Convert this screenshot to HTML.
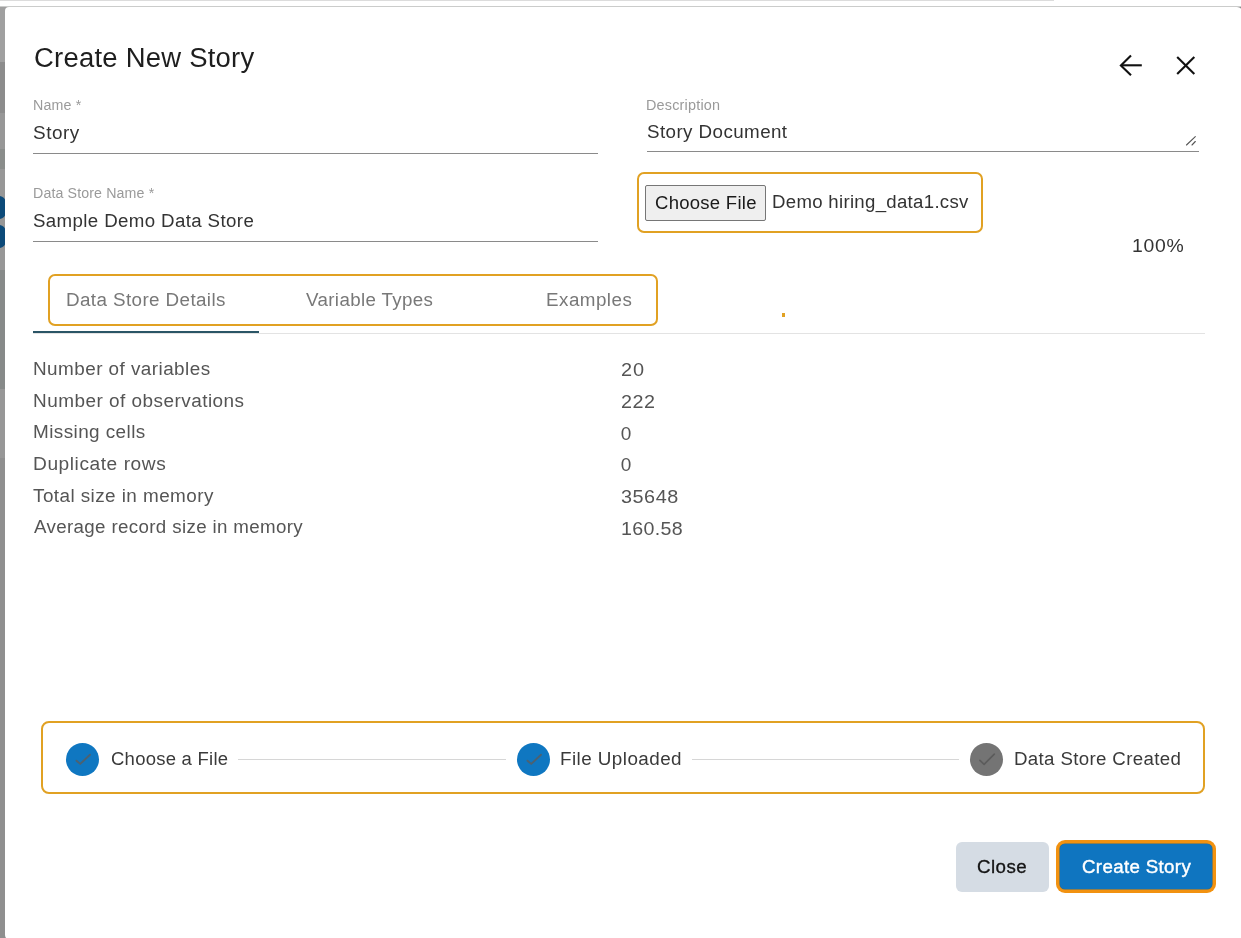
<!DOCTYPE html>
<html><head><meta charset="utf-8"><title>Create New Story</title>
<style>
html,body{margin:0;padding:0;width:1241px;height:938px;overflow:hidden;background:#fff;font-family:"Liberation Sans",sans-serif;}
.a{position:absolute;box-sizing:border-box;}
.t{position:absolute;line-height:0;white-space:nowrap;font-family:"Liberation Sans",sans-serif;}
</style></head><body>
<!-- backdrop -->
<div class="a" style="left:0;top:0;width:1054px;height:1px;background:#dcdcdc"></div>
<div class="a" style="left:0;top:6px;width:1241px;height:1px;background:#cbcccb"></div>
<div class="a" style="left:0;top:7px;width:12px;height:931px;background:#8f8f8f"></div>
<div class="a" style="left:0;top:7px;width:12px;height:55px;background:#a0a0a0"></div>
<div class="a" style="left:0;top:62px;width:6px;height:51px;background:#8c8c8c"></div>
<div class="a" style="left:0;top:113px;width:6px;height:36px;background:#979797"></div>
<div class="a" style="left:0;top:149px;width:6px;height:20px;background:#8a8d8b"></div>
<div class="a" style="left:0;top:169px;width:6px;height:101px;background:#979797"></div>
<div class="a" style="left:0;top:270px;width:6px;height:119px;background:#878a89"></div>
<div class="a" style="left:0;top:389px;width:6px;height:69px;background:#979797"></div>
<div class="a" style="left:-6px;top:196px;width:12px;height:23px;border-radius:0 7px 7px 0;background:#0c4a79"></div>
<div class="a" style="left:-6px;top:224.5px;width:12px;height:23px;border-radius:0 7px 7px 0;background:#0c4a79"></div>
<div class="a" style="left:1230px;top:7px;width:11px;height:14px;background:#8c8c8c"></div>
<!-- modal -->
<div class="a" style="left:5px;top:7px;width:1238px;height:933px;background:#fff;border-radius:4px 6px 6px 5px"></div>

<!-- header icons -->
<svg class="a" style="left:1110px;top:45px" width="100" height="40" viewBox="0 0 100 40"><g fill="none" stroke="#111" stroke-width="2.1" stroke-linecap="butt" stroke-linejoin="miter"><polyline points="21,10.5 10.9,20.4 21,30.3"/><line x1="11" y1="20.3" x2="31.8" y2="20.3"/><line x1="67.2" y1="11.9" x2="84.3" y2="29"/><line x1="67.2" y1="29" x2="84.3" y2="11.9"/></g></svg>
<!-- underlines -->
<div class="a" style="left:33px;top:153px;width:565px;height:1px;background:#8a8a8a"></div>
<div class="a" style="left:647px;top:151px;width:552px;height:1px;background:#8a8a8a"></div>
<div class="a" style="left:33px;top:241px;width:565px;height:1px;background:#8a8a8a"></div>
<!-- resize handle -->
<svg class="a" style="left:1180px;top:130px" width="20" height="20" viewBox="0 0 20 20"><g stroke="#555" stroke-width="1.1" stroke-linecap="round"><line x1="6.5" y1="15" x2="15.3" y2="6.6"/><line x1="12" y1="15" x2="15.3" y2="11.5"/></g></svg>

<!-- file box -->
<div class="a" style="left:637px;top:172px;width:346px;height:61px;border:2px solid #e1a123;border-radius:7px"></div>
<div class="a" style="left:645px;top:185px;width:121px;height:36px;border:1px solid #767676;border-radius:2px;background:#efefef"></div>

<!-- tabs -->
<div class="a" style="left:48px;top:274px;width:610px;height:52px;border:2px solid #e1a123;border-radius:7px"></div>
<div class="a" style="left:33px;top:333px;width:1172px;height:1px;background:#e3e3e3"></div>
<div class="a" style="left:33px;top:331px;width:226px;height:2px;background:#2a5566"></div>
<div class="a" style="left:782px;top:313px;width:3px;height:4px;background:#e1a123"></div>

<!-- stepper -->
<div class="a" style="left:41px;top:721px;width:1164px;height:73px;border:2px solid #e1a123;border-radius:8px"></div>
<div class="a" style="left:238px;top:759px;width:268px;height:1px;background:#d6d6d6"></div>
<div class="a" style="left:692px;top:759px;width:267px;height:1px;background:#d6d6d6"></div>
<div class="a" style="left:65.8px;top:742.8px;width:33.2px;height:33.2px;border-radius:50%;background:#0f77c1"></div>
<div class="a" style="left:516.8px;top:742.8px;width:33.2px;height:33.2px;border-radius:50%;background:#0f77c1"></div>
<div class="a" style="left:970px;top:742.9px;width:33px;height:33px;border-radius:50%;background:#747474"></div>
<svg class="a" style="left:65.8px;top:742.8px" width="34" height="34" viewBox="0 0 34 34"><path d="M10.5 17.7 L14.2 20.9 L24 11.8" fill="none" stroke="#4d6170" stroke-width="1.9" stroke-linecap="round" stroke-linejoin="round"/></svg>
<svg class="a" style="left:516.8px;top:742.8px" width="34" height="34" viewBox="0 0 34 34"><path d="M10.5 17.7 L14.2 20.9 L24 11.8" fill="none" stroke="#4d6170" stroke-width="1.9" stroke-linecap="round" stroke-linejoin="round"/></svg>
<svg class="a" style="left:970px;top:742.8px" width="34" height="34" viewBox="0 0 34 34"><path d="M9.9 17.3 L14.1 21.3 L24.3 11.1" fill="none" stroke="#5c5c5c" stroke-width="1.7" stroke-linecap="round" stroke-linejoin="round"/></svg>

<!-- buttons -->
<div class="a" style="left:956px;top:842px;width:93px;height:50px;border-radius:6px;background:#d5dce4"></div>
<div class="a" style="left:1056px;top:840px;width:160px;height:53px;border-radius:9px;background:#f29210"></div>
<div class="a" style="left:1060px;top:844px;width:152px;height:44.5px;border-radius:5px;background:#0f75c0;box-shadow:0 0 0 0.6px #2f6a88"></div>

<div style="position:absolute;left:0;top:0;width:1241px;height:938px;will-change:transform">
<div class="t" style="left:33.91px;top:58.30px;font-size:27px;letter-spacing:0.231px;color:#1e1e1e;font-weight:400;transform:scaleX(1.0167);transform-origin:0 0;">Create New Story</div>
<div class="t" style="left:32.63px;top:104.80px;font-size:14px;letter-spacing:0.156px;color:#9a9a9a;font-weight:400;transform:scaleX(1.0175);transform-origin:0 0;">Name *</div>
<div class="t" style="left:646.42px;top:104.80px;font-size:14px;letter-spacing:0.191px;color:#9a9a9a;font-weight:400;transform:scaleX(1.0289);transform-origin:0 0;">Description</div>
<div class="t" style="left:32.63px;top:192.60px;font-size:14px;letter-spacing:0.113px;color:#9a9a9a;font-weight:400;transform:scaleX(1.0158);transform-origin:0 0;">Data Store Name *</div>
<div class="t" style="left:32.94px;top:133.00px;font-size:18px;letter-spacing:0.504px;color:#333333;font-weight:400;transform:scaleX(1.0515);transform-origin:0 0;">Story</div>
<div class="t" style="left:646.75px;top:131.80px;font-size:18px;letter-spacing:0.406px;color:#333333;font-weight:400;transform:scaleX(1.0429);transform-origin:0 0;">Story Document</div>
<div class="t" style="left:32.95px;top:221.00px;font-size:18px;letter-spacing:0.358px;color:#333333;font-weight:400;transform:scaleX(1.0384);transform-origin:0 0;">Sample Demo Data Store</div>
<div class="t" style="left:654.86px;top:202.90px;font-size:18px;letter-spacing:0.261px;color:#1a1a1a;font-weight:400;transform:scaleX(1.0284);transform-origin:0 0;">Choose File</div>
<div class="t" style="left:771.67px;top:201.60px;font-size:18px;letter-spacing:0.296px;color:#333333;font-weight:400;transform:scaleX(1.0335);transform-origin:0 0;">Demo hiring_data1.csv</div>
<div class="t" style="left:1132.32px;top:245.80px;font-size:18.5px;letter-spacing:0.677px;color:#333333;font-weight:400;transform:scaleX(1.0470);transform-origin:0 0;">100%</div>
<div class="t" style="left:66.06px;top:300.10px;font-size:18px;letter-spacing:0.373px;color:#787878;font-weight:400;transform:scaleX(1.0461);transform-origin:0 0;">Data Store Details</div>
<div class="t" style="left:305.82px;top:300.10px;font-size:18px;letter-spacing:0.351px;color:#787878;font-weight:400;transform:scaleX(1.0406);transform-origin:0 0;">Variable Types</div>
<div class="t" style="left:545.66px;top:300.10px;font-size:18px;letter-spacing:0.458px;color:#787878;font-weight:400;transform:scaleX(1.0435);transform-origin:0 0;">Examples</div>
<div class="t" style="left:33.45px;top:368.90px;font-size:18px;letter-spacing:0.422px;color:#555555;font-weight:400;transform:scaleX(1.0502);transform-origin:0 0;">Number of variables</div>
<div class="t" style="left:33.45px;top:401.30px;font-size:18px;letter-spacing:0.449px;color:#555555;font-weight:400;transform:scaleX(1.0525);transform-origin:0 0;">Number of observations</div>
<div class="t" style="left:33.45px;top:432.20px;font-size:18px;letter-spacing:0.401px;color:#555555;font-weight:400;transform:scaleX(1.0506);transform-origin:0 0;">Missing cells</div>
<div class="t" style="left:32.93px;top:464.40px;font-size:18px;letter-spacing:0.528px;color:#555555;font-weight:400;transform:scaleX(1.0629);transform-origin:0 0;">Duplicate rows</div>
<div class="t" style="left:33.18px;top:496.30px;font-size:18px;letter-spacing:0.408px;color:#555555;font-weight:400;transform:scaleX(1.0498);transform-origin:0 0;">Total size in memory</div>
<div class="t" style="left:33.86px;top:527.20px;font-size:18px;letter-spacing:0.342px;color:#555555;font-weight:400;transform:scaleX(1.0400);transform-origin:0 0;">Average record size in memory</div>
<div class="t" style="left:621.00px;top:369.80px;font-size:19px;letter-spacing:0.889px;color:#555555;font-weight:400;transform:scaleX(1.0480);transform-origin:0 0;">20</div>
<div class="t" style="left:621.01px;top:401.80px;font-size:19px;letter-spacing:0.556px;color:#555555;font-weight:400;transform:scaleX(1.0388);transform-origin:0 0;">222</div>
<div class="t" style="left:620.76px;top:433.80px;font-size:19px;letter-spacing:0.000px;color:#555555;font-weight:400;">0</div>
<div class="t" style="left:620.76px;top:464.80px;font-size:19px;letter-spacing:0.000px;color:#555555;font-weight:400;">0</div>
<div class="t" style="left:621.05px;top:496.80px;font-size:19px;letter-spacing:0.518px;color:#555555;font-weight:400;transform:scaleX(1.0421);transform-origin:0 0;">35648</div>
<div class="t" style="left:621.31px;top:529.00px;font-size:19px;letter-spacing:0.345px;color:#555555;font-weight:400;transform:scaleX(1.0319);transform-origin:0 0;">160.58</div>
<div class="t" style="left:110.56px;top:758.60px;font-size:18px;letter-spacing:0.242px;color:#3a3a3a;font-weight:400;transform:scaleX(1.0272);transform-origin:0 0;">Choose a File</div>
<div class="t" style="left:560.25px;top:758.60px;font-size:18px;letter-spacing:0.412px;color:#3a3a3a;font-weight:400;transform:scaleX(1.0478);transform-origin:0 0;">File Uploaded</div>
<div class="t" style="left:1013.57px;top:758.60px;font-size:18px;letter-spacing:0.330px;color:#3a3a3a;font-weight:400;transform:scaleX(1.0382);transform-origin:0 0;">Data Store Created</div>
<div class="t" style="left:977.35px;top:867.00px;font-size:18px;letter-spacing:0.432px;color:#141414;font-weight:400;-webkit-text-stroke:0.3px #141414;transform:scaleX(1.0406);transform-origin:0 0;">Close</div>
<div class="t" style="left:1082.05px;top:867.00px;font-size:18px;letter-spacing:0.337px;color:#ffffff;font-weight:400;-webkit-text-stroke:0.4px #ffffff;transform:scaleX(1.0385);transform-origin:0 0;">Create Story</div>
</div>
</body></html>
